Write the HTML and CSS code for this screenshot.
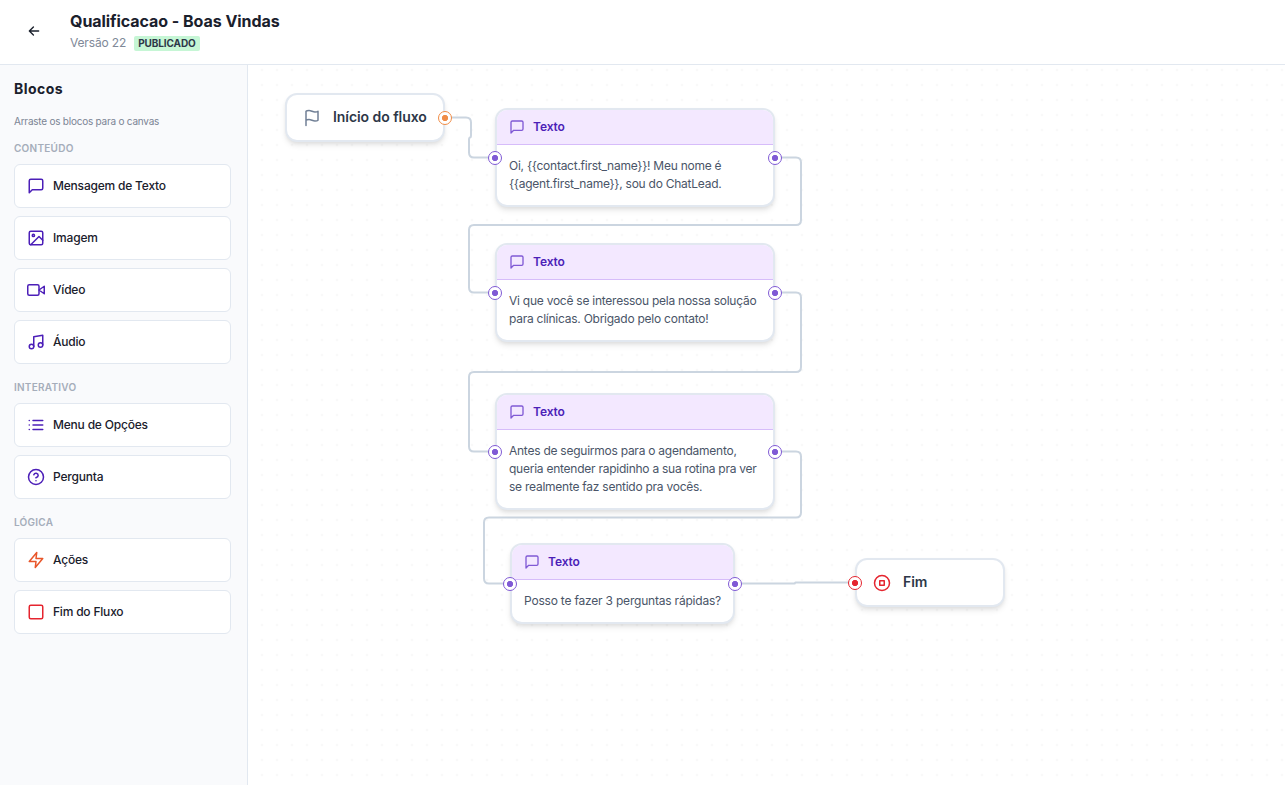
FILE: index.html
```
<!DOCTYPE html>
<html lang="pt-BR">
<head>
  <meta charset="UTF-8" />
  <title>Qualificacao - Boas Vindas</title>
  <link rel="stylesheet" href="styles.css">
</head>
<body>

  <!-- shared icons -->
  <svg class="sprite">
    <symbol id="i-message" viewBox="0 0 24 24"><path d="M21 15a2 2 0 0 1-2 2H7l-4 4V5a2 2 0 0 1 2-2h14a2 2 0 0 1 2 2z"/></symbol>
  </svg>

  <header class="topbar">
    <button class="back" aria-label="Voltar">
      <svg class="icon" viewBox="0 0 24 24"><path d="M20 12H4M11 19l-7-7 7-7"/></svg>
    </button>
    <div class="flow-info">
      <h1>Qualificacao - Boas Vindas</h1>
      <div class="flow-meta">
        <span class="version">Versão 22</span>
        <span class="badge">PUBLICADO</span>
      </div>
    </div>
  </header>

  <main class="editor">
    <aside class="sidebar">
      <h2>Blocos</h2>
      <p class="hint">Arraste os blocos para o canvas</p>

      <section class="group">
        <h3>CONTEÚDO</h3>
        <div class="block"><svg class="icon"><use href="#i-message"/></svg><span>Mensagem de Texto</span></div>
        <div class="block"><svg class="icon" viewBox="0 0 24 24"><rect x="3" y="3" width="18" height="18" rx="2"/><circle cx="8.5" cy="8.5" r="1.5"/><path d="M21 15l-5-5L5 21"/></svg><span>Imagem</span></div>
        <div class="block"><svg class="icon" viewBox="0 0 24 24"><path d="M23 7l-7 5 7 5V7z"/><rect x="1" y="5" width="15" height="14" rx="2"/></svg><span>Vídeo</span></div>
        <div class="block"><svg class="icon" viewBox="0 0 24 24"><path d="M9 18V5l12-2v13"/><circle cx="6" cy="18" r="3"/><circle cx="18" cy="16" r="3"/></svg><span>Áudio</span></div>
      </section>

      <section class="group">
        <h3>INTERATIVO</h3>
        <div class="block"><svg class="icon" viewBox="0 0 24 24"><path d="M8 6h13M8 12h13M8 18h13M3 6h.01M3 12h.01M3 18h.01"/></svg><span>Menu de Opções</span></div>
        <div class="block"><svg class="icon" viewBox="0 0 24 24"><circle cx="12" cy="12" r="10"/><path d="M9.09 9a3 3 0 0 1 5.83 1c0 2-3 3-3 3M12 17h.01"/></svg><span>Pergunta</span></div>
      </section>

      <section class="group">
        <h3>LÓGICA</h3>
        <div class="block orange"><svg class="icon" viewBox="0 0 24 24"><path d="M13 2L3 14h9l-1 8 10-12h-9l1-8z"/></svg><span>Ações</span></div>
        <div class="block red"><svg class="icon" viewBox="0 0 24 24"><rect x="3" y="3" width="18" height="18" rx="2"/></svg><span>Fim do Fluxo</span></div>
      </section>
    </aside>

    <div class="canvas">
      <svg class="edges" viewBox="248 65 1037 720">
        <path d="M445 117.5H466Q471 117.5 471 122.5V135Q471 137.5 470 137.5T469 140V152.5Q469 157.5 474 157.5H495"/>
        <path d="M775 157.5H796Q801 157.5 801 162.5V220Q801 225 796 225H474Q469 225 469 230V287.5Q469 292.5 474 292.5H495"/>
        <path d="M775 292.5H796Q801 292.5 801 297.5V367Q801 372 796 372H474Q469 372 469 377V446.5Q469 451.5 474 451.5H495"/>
        <path d="M775 451.5H796Q801 451.5 801 456.5V512.5Q801 517.5 796 517.5H489Q484 517.5 484 522.5V578.5Q484 583.5 489 583.5H510"/>
        <path d="M735 583.5H794.5Q795 583.5 795 583T795.5 582.5H855"/>
      </svg>

      <div class="node simple n-start">
        <svg class="icon" viewBox="0 0 24 24"><path d="M4 15s1-1 4-1 5 2 8 2 4-1 4-1V3s-1 1-4 1-5-2-8-2-4 1-4 1zM4 22v-7"/></svg>
        <span>Início do fluxo</span>
        <i class="handle out orange"></i>
      </div>

      <div class="node n-1">
        <div class="node-head"><svg class="icon"><use href="#i-message"/></svg><span>Texto</span></div>
        <p>Oi, {{contact.first_name}}! Meu nome é<br>{{agent.first_name}}, sou do ChatLead.</p>
        <i class="handle in"></i><i class="handle out"></i>
      </div>

      <div class="node n-2">
        <div class="node-head"><svg class="icon"><use href="#i-message"/></svg><span>Texto</span></div>
        <p>Vi que você se interessou pela nossa solução<br>para clínicas. Obrigado pelo contato!</p>
        <i class="handle in"></i><i class="handle out"></i>
      </div>

      <div class="node n-3">
        <div class="node-head"><svg class="icon"><use href="#i-message"/></svg><span>Texto</span></div>
        <p>Antes de seguirmos para o agendamento,<br>queria entender rapidinho a sua rotina pra ver<br>se realmente faz sentido pra vocês.</p>
        <i class="handle in"></i><i class="handle out"></i>
      </div>

      <div class="node n-4">
        <div class="node-head"><svg class="icon"><use href="#i-message"/></svg><span>Texto</span></div>
        <p>Posso te fazer 3 perguntas rápidas?</p>
        <i class="handle in"></i><i class="handle out"></i>
      </div>

      <div class="node simple n-end">
        <svg class="icon" viewBox="0 0 24 24"><circle cx="12" cy="12" r="10"/><rect x="9" y="9" width="6" height="6"/></svg>
        <span>Fim</span>
        <i class="handle in red"></i>
      </div>
    </div>
  </main>

</body>
</html>
```
FILE: styles.css
```
* {
  box-sizing: border-box;
  margin: 0;
  padding: 0;
}

body {
  height: 100vh;
  display: flex;
  flex-direction: column;
  overflow: hidden;
  font-family: Inter, "Liberation Sans", sans-serif;
  color: #1a202c;
  background: #fff;
}

.sprite {
  position: absolute;
  width: 0;
  height: 0;
}

.icon {
  flex: none;
  width: 18px;
  height: 18px;
  fill: none;
  stroke: currentColor;
  stroke-width: 2;
  stroke-linecap: round;
  stroke-linejoin: round;
}

/* Top bar */
.topbar {
  flex: none;
  height: 65px;
  display: flex;
  align-items: flex-start;
  padding: 11px 14px;
  gap: 16px;
  border-bottom: 1px solid #e2e8f0;
}

.back {
  width: 40px;
  height: 40px;
  display: flex;
  align-items: center;
  justify-content: center;
  border: none;
  background: none;
  color: #1a202c;
}

.back .icon {
  width: 14px;
  height: 14px;
  stroke-width: 2.3;
}

h1 {
  font-size: 16px;
  line-height: 21px;
  font-weight: 700;
  letter-spacing: -0.05px;
}

.flow-meta {
  display: flex;
  align-items: center;
  gap: 8px;
  margin-top: 3px;
}

.version {
  font-size: 12px;
  line-height: 16px;
  letter-spacing: -0.15px;
  color: #808998;
}

.badge {
  padding: 0 4px;
  border-radius: 2px;
  font-size: 10px;
  line-height: 15px;
  font-weight: 700;
  letter-spacing: -0.1px;
  color: #2d3748;
  background: #c6f6d5;
}

.editor {
  flex: 1;
  display: flex;
  min-height: 0;
}

/* Block list */
.sidebar {
  flex: none;
  width: 248px;
  padding: 14px 16px 14px 14px;
  border-right: 1px solid #e2e8f0;
  background: #f9fafc;
}

h2 {
  font-size: 14px;
  line-height: 20px;
  font-weight: 700;
  letter-spacing: 0.45px;
}

.hint {
  margin: 14px 0 10px;
  font-size: 10px;
  line-height: 17px;
  color: #7b8494;
  letter-spacing: -0.23px;
}

.group {
  display: flex;
  flex-direction: column;
  gap: 8px;
  margin-bottom: 15px;
}

h3 {
  font-size: 10px;
  line-height: 16px;
  font-weight: 600;
  letter-spacing: 0.25px;
  color: #a5adba;
}

.block {
  height: 44px;
  display: flex;
  align-items: center;
  gap: 8px;
  padding: 0 12px;
  border: 1px solid #e2e8f0;
  border-radius: 6px;
  background: #fff;
  color: #4c1fb8;
}

.block span {
  padding-bottom: 2px;
  font-size: 12px;
  font-weight: 500;
  letter-spacing: -0.2px;
  color: #1a202c;
}

.block.orange { color: #e8562a; }
.block.red { color: #e5252f; }

/* Canvas */
.canvas {
  flex: 1;
  position: relative;
  background-image: radial-gradient(circle, #f1f1f1 0.8px, transparent 1.1px);
  background-size: 15px 15px;
  background-position: 6.5px -2.5px;
}

.edges {
  position: absolute;
  inset: 0;
  width: 1037px;
  height: 720px;
  fill: none;
  stroke: #cbd5e0;
  stroke-width: 2;
}

.node {
  position: absolute;
  width: 280px;
  border: 2px solid #e2e8f0;
  border-radius: 12px;
  background: #fff;
  box-shadow: 0 4px 6px -1px rgba(0, 0, 0, 0.1), 0 2px 4px -1px rgba(0, 0, 0, 0.06);
}

.n-start { left: 37px; top: 28px; }
.n-1 { left: 247px; top: 43px; }
.n-2 { left: 247px; top: 178px; }
.n-3 { left: 247px; top: 328px; }
.n-4 { left: 262px; top: 478px; }
.n-end { left: 607px; top: 493px; }

.n-start { width: 160px; }
.n-4 { width: 225px; }
.n-end { width: 150px; }

.node-head {
  height: 35px;
  display: flex;
  align-items: center;
  gap: 8px;
  padding: 0 12px;
  border-bottom: 1px solid #d6bcfa;
  border-radius: 10px 10px 0 0;
  background: #f3e8ff;
  color: #4c1fb8;
  font-size: 12px;
  font-weight: 600;
  letter-spacing: -0.1px;
}

.node-head span {
  padding-bottom: 2px;
}

.node-head .icon {
  width: 16px;
  height: 16px;
  color: #805ad5;
}

.node p {
  padding: 12px;
  font-size: 12px;
  line-height: 18px;
  letter-spacing: -0.25px;
  color: #4a5568;
  white-space: nowrap;
}

.n-4 p {
  letter-spacing: -0.2px;
}

.simple {
  height: 49px;
  display: flex;
  align-items: center;
  gap: 12px;
  padding: 0 16px;
  font-size: 14px;
  font-weight: 600;
  letter-spacing: -0.06px;
  white-space: nowrap;
  color: #2d3748;
}

.simple span { padding-bottom: 2px; }
.simple .icon { color: #718096; }
.n-end .icon { color: #e5252f; }

.handle {
  position: absolute;
  top: 50%;
  width: 14px;
  height: 14px;
  margin-top: -7px;
  border: 1px solid currentColor;
  border-radius: 50%;
  background: radial-gradient(circle, currentColor 2.8px, #fff 3.4px);
  color: #805ad5;
}

.handle.in { left: -9px; }
.handle.out { right: -9px; }
.handle.orange { color: #f08c46; }
.handle.red { color: #e5252f; }
```
